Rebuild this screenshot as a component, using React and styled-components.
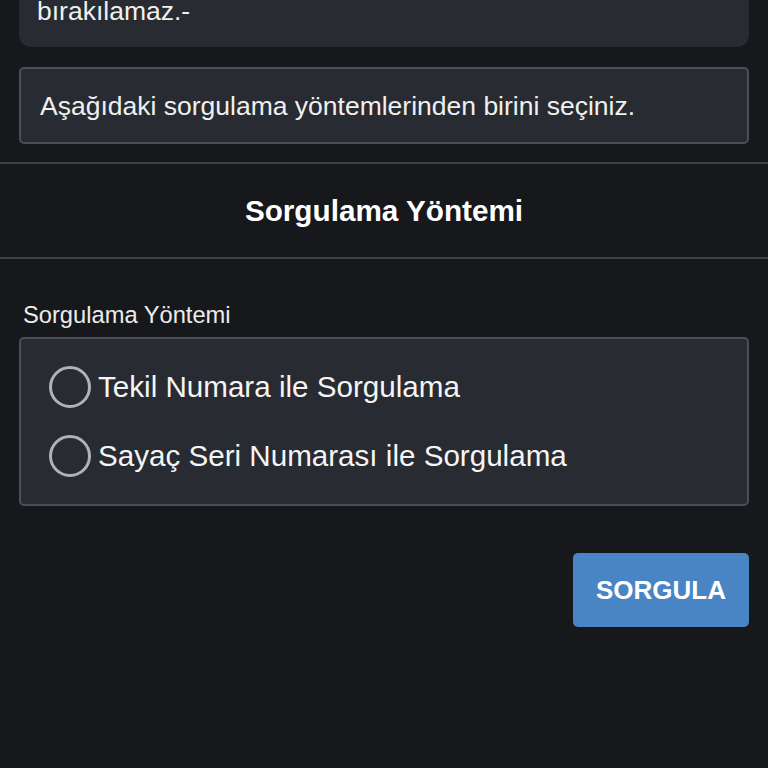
import styled, { createGlobalStyle } from "styled-components";
import { useState } from "react";

const GlobalStyle = createGlobalStyle`
  html, body {
    margin: 0;
    padding: 0;
    background: #17181b;
    font-family: "Liberation Sans", Arial, sans-serif;
    color: #f2f2f2;
  }
`;

const Page = styled.div`
  width: 768px;
  height: 768px;
  overflow: hidden;
  background: #17181b;
`;

const Scroll = styled.div`
  margin-top: -65px;
`;

const Section = styled.div`
  padding: 0 19px;
`;

const NoticeCard = styled.div`
  background: #282b31;
  border-radius: 12px;
  padding: 28px 18px 20px 18px;
  font-size: 26.5px;
  line-height: 32px;
  color: #f0f0f0;
`;

const InfoBox = styled.div`
  margin-top: 20px;
  background: #282b31;
  border: 2px solid #4b4f55;
  border-radius: 5px;
  padding: 22px 19px 21px 19px;
  font-size: 26.5px;
  line-height: 30px;
  color: #f0f0f0;
`;

const Header = styled.div`
  margin-top: 18px;
  border-top: 2px solid #404246;
  border-bottom: 2px solid #404246;
  height: 93px;
  display: flex;
  align-items: center;
  justify-content: center;
`;

const Title = styled.h2`
  margin: 0;
  font-size: 29.7px;
  font-weight: 700;
  color: #ffffff;
`;

const Label = styled.div`
  margin: 42px 0 8px 4px;
  font-size: 23.7px;
  line-height: 28px;
  color: #ececec;
`;

const OptionGroup = styled.div`
  background: #282b31;
  border: 2px solid #4b4f55;
  border-radius: 5px;
  padding: 27px 0 27px 28px;
  display: flex;
  flex-direction: column;
  gap: 27px;
`;

const Option = styled.label`
  display: flex;
  align-items: center;
  gap: 7px;
  height: 42px;
  font-size: 29.6px;
  color: #f5f5f5;
  cursor: pointer;
`;

const Circle = styled.span`
  box-sizing: border-box;
  width: 42px;
  height: 42px;
  border-radius: 50%;
  border: 3px solid ${(p) => (p.checked ? "#4985c4" : "#b2b2b2")};
  display: flex;
  align-items: center;
  justify-content: center;
  flex-shrink: 0;

  &::after {
    content: "";
    width: 20px;
    height: 20px;
    border-radius: 50%;
    background: #4985c4;
    display: ${(p) => (p.checked ? "block" : "none")};
  }
`;

const Actions = styled.div`
  display: flex;
  justify-content: flex-end;
  margin-top: 47px;
`;

const Button = styled.button`
  width: 176px;
  height: 74px;
  border: none;
  border-radius: 5px;
  background: #4985c4;
  color: #ffffff;
  font-family: "Liberation Sans", Arial, sans-serif;
  font-size: 26px;
  font-weight: 700;
  cursor: pointer;
`;

const options = [
  "Tekil Numara ile Sorgulama",
  "Sayaç Seri Numarası ile Sorgulama",
];

const App = () => {
  const [selected, setSelected] = useState(null);

  return (
    <Page>
      <GlobalStyle />
      <Scroll>
        <Section>
          <NoticeCard>
            Sorgulama alanı boş
            <br />
            bırakılamaz.-
          </NoticeCard>
          <InfoBox>Aşağıdaki sorgulama yöntemlerinden birini seçiniz.</InfoBox>
        </Section>
        <Header>
          <Title>Sorgulama Yöntemi</Title>
        </Header>
        <Section>
          <Label>Sorgulama Yöntemi</Label>
          <OptionGroup>
            {options.map((o, i) => (
              <Option key={o} onClick={() => setSelected(i)}>
                <Circle checked={selected === i} />
                {o}
              </Option>
            ))}
          </OptionGroup>
          <Actions>
            <Button>SORGULA</Button>
          </Actions>
        </Section>
      </Scroll>
    </Page>
  );
};

export default App;
